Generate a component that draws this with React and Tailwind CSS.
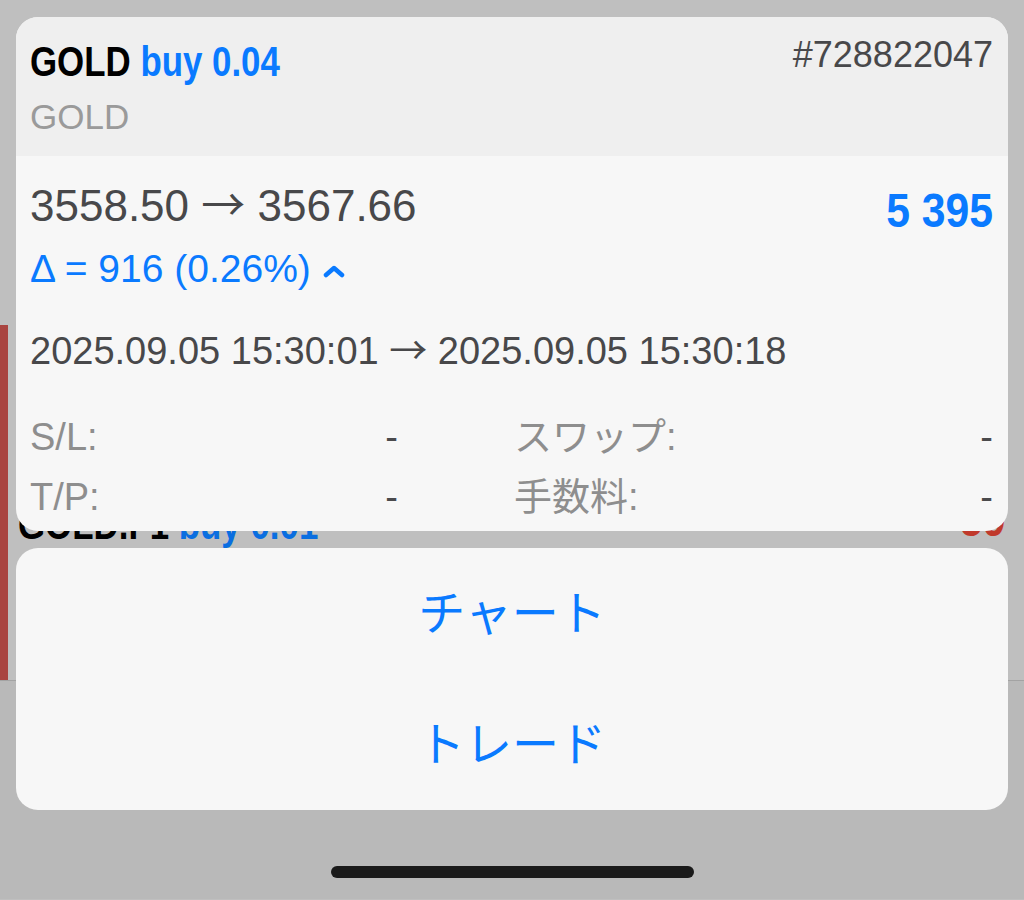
import React from "react";

const blue = "text-[#0a7aff]";

function Arrow() {
  return <span className="font-['Noto_Sans_CJK_JP',sans-serif] font-normal leading-[0]">→</span>;
}

function ChevronUp() {
  return (
    <svg width="22" height="14" viewBox="0 0 22 14" className="ml-3 mt-[6px]">
      <path
        d="M3 11 L11 4 L19 11"
        fill="none"
        stroke="#0a7aff"
        strokeWidth="4.5"
        strokeLinecap="round"
        strokeLinejoin="round"
      />
    </svg>
  );
}

function InfoRow({ label, value, label2, value2, className }) {
  return (
    <div className={`flex h-[38px] text-[38px] leading-none ${className}`}>
      <div className="w-[368px] flex justify-between">
        <span className="text-[#8e8e8e]">{label}</span>
        <span className="text-[#4a4a4c]">{value}</span>
      </div>
      <div className="flex-1 ml-[116px] flex justify-between">
        <span className="text-[#8e8e8e]">{label2}</span>
        <span className="text-[#4a4a4c]">{value2}</span>
      </div>
    </div>
  );
}

function PositionCard() {
  return (
    <div className="rounded-[22px] overflow-hidden bg-[#f7f7f7]">
      <div className="h-[139px] bg-[#efefef] pl-[14px] pr-[15px] pt-[20px] flex justify-between items-start">
        <div className="flex flex-col">
          <div className="mt-[4px] text-[42px] leading-none font-bold origin-left scale-x-[0.83] whitespace-nowrap">
            <span className="text-black">GOLD</span>{" "}
            <span className={blue}>buy 0.04</span>
          </div>
          <div className="mt-[16px] text-[35px] leading-none text-[#9a9a9a]">GOLD</div>
        </div>
        <div className="text-[36px] leading-none text-[#48484a]">#728822047</div>
      </div>

      <div className="pl-[14px] pr-[15px] pt-[28px] pb-[15px]">
        <div className="h-[44px] flex justify-between items-start">
          <div className="h-[44px] text-[44px] leading-none text-[#48484a] whitespace-nowrap">
            3558.50 <Arrow /> 3567.66
          </div>
          <div className={`mt-[3px] text-[48px] leading-none font-bold origin-right scale-x-[0.89] ${blue}`}>
            5 395
          </div>
        </div>
        <div className={`mt-[21px] h-[38px] flex items-center text-[39px] leading-none ${blue}`}>
          <span>Δ = 916 (0.26%)</span>
          <ChevronUp />
        </div>
        <div className="mt-[45px] h-[38px] text-[38px] leading-none text-[#48484a] whitespace-nowrap">
          2025.09.05 15:30:01 <Arrow /> 2025.09.05 15:30:18
        </div>
        <InfoRow className="mt-[48px]" label="S/L:" value="-" label2="スワップ:" value2="-" />
        <InfoRow className="mt-[22px]" label="T/P:" value="-" label2="手数料:" value2="-" />
      </div>
    </div>
  );
}

function ActionSheet() {
  return (
    <div className="mt-[17px] rounded-[22px] bg-[#f7f7f7] flex flex-col">
      {["チャート", "トレード"].map((item) => (
        <button
          key={item}
          className={`h-[131px] flex items-center justify-center text-[47px] leading-none ${blue}`}
        >
          {item}
        </button>
      ))}
    </div>
  );
}

export default function App() {
  return (
    <div className="relative w-[1024px] h-[900px] overflow-hidden bg-[#bfbfbf] font-['Liberation_Sans','Noto_Sans_CJK_JP',sans-serif]">
      {/* dimmed list behind the sheet */}
      <div className="h-[325px]" />
      <div className="h-[356px] flex border-b border-[#a3a3a3]">
        <div className="w-2 bg-[#a94440]" />
        <div className="flex-1 pl-[10px] pr-[19px] flex justify-between items-start">
          <div className="mt-[179px] text-[42px] leading-none font-bold origin-left scale-x-[0.83] whitespace-nowrap">
            <span className="text-black">GOLD.F1</span>{" "}
            <span className="text-[#0a6ee0]">buy 0.01</span>
          </div>
          <div className="mt-[171px] text-[48px] leading-none font-bold text-[#c0392b] origin-right scale-x-[0.85]">
            -59
          </div>
        </div>
      </div>
      <div className="h-[218px] bg-[#b9b9b9]" />

      {/* overlay sheet */}
      <div className="absolute inset-0 flex flex-col px-4 pt-[17px]">
        <PositionCard />
        <ActionSheet />
        <div className="mt-[56px] self-center w-[363px] h-3 rounded-full bg-[#1a1a1a]" />
      </div>
    </div>
  );
}
